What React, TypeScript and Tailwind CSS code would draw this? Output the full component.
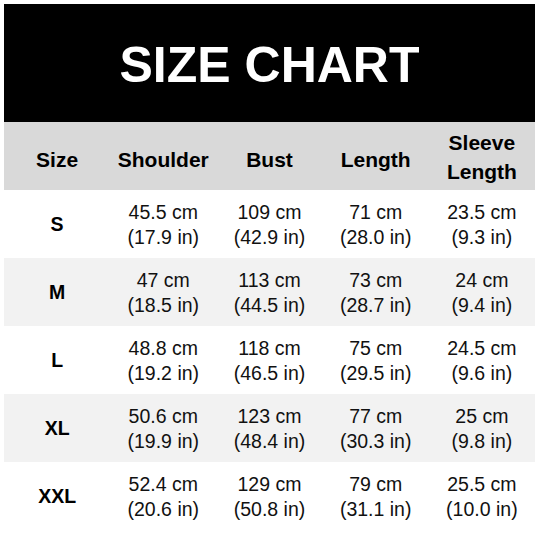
const rows = [
  { size: "S", cells: [["45.5 cm", "(17.9 in)"], ["109 cm", "(42.9 in)"], ["71 cm", "(28.0 in)"], ["23.5 cm", "(9.3 in)"]] },
  { size: "M", cells: [["47 cm", "(18.5 in)"], ["113 cm", "(44.5 in)"], ["73 cm", "(28.7 in)"], ["24 cm", "(9.4 in)"]] },
  { size: "L", cells: [["48.8 cm", "(19.2 in)"], ["118 cm", "(46.5 in)"], ["75 cm", "(29.5 in)"], ["24.5 cm", "(9.6 in)"]] },
  { size: "XL", cells: [["50.6 cm", "(19.9 in)"], ["123 cm", "(48.4 in)"], ["77 cm", "(30.3 in)"], ["25 cm", "(9.8 in)"]] },
  { size: "XXL", cells: [["52.4 cm", "(20.6 in)"], ["129 cm", "(50.8 in)"], ["79 cm", "(31.1 in)"], ["25.5 cm", "(10.0 in)"]] },
];

export default function App() {
  return (
    <div className="w-[540px] h-[540px] bg-white pt-[4px] pl-[4px] pr-[5px] font-['Liberation_Sans',Arial,sans-serif] text-black">
      {/* Title */}
      <div className="h-[118px] bg-black flex items-center justify-center pt-[4px]">
        <h1 className="text-[50px] font-bold text-white leading-none">SIZE CHART</h1>
      </div>

      {/* Header row */}
      <div className="grid grid-cols-5 h-[68px] bg-[#d9d9d9] text-[21px] font-bold leading-[29px] text-center">
        <div className="flex items-center justify-center pt-[6px]">Size</div>
        <div className="flex items-center justify-center pt-[6px]">Shoulder</div>
        <div className="flex items-center justify-center pt-[6px]">Bust</div>
        <div className="flex items-center justify-center pt-[6px]">Length</div>
        <div className="flex items-center justify-center pt-[2px]">
          Sleeve
          <br />
          Length
        </div>
      </div>

      {/* Rows */}
      {rows.map((row, i) => (
        <div
          key={row.size}
          className={`grid grid-cols-5 h-[68px] text-center ${i % 2 === 1 ? "bg-[#f2f2f2]" : "bg-white"}`}
        >
          <div className="flex items-center justify-center text-[19.5px] font-bold pt-[1px]">{row.size}</div>
          {row.cells.map(([cm, inch], j) => (
            <div key={j} className="flex flex-col items-center justify-center text-[19.5px] leading-[25px] text-[#111] pt-[2px]">
              <span>{cm}</span>
              <span>{inch}</span>
            </div>
          ))}
        </div>
      ))}
    </div>
  );
}
